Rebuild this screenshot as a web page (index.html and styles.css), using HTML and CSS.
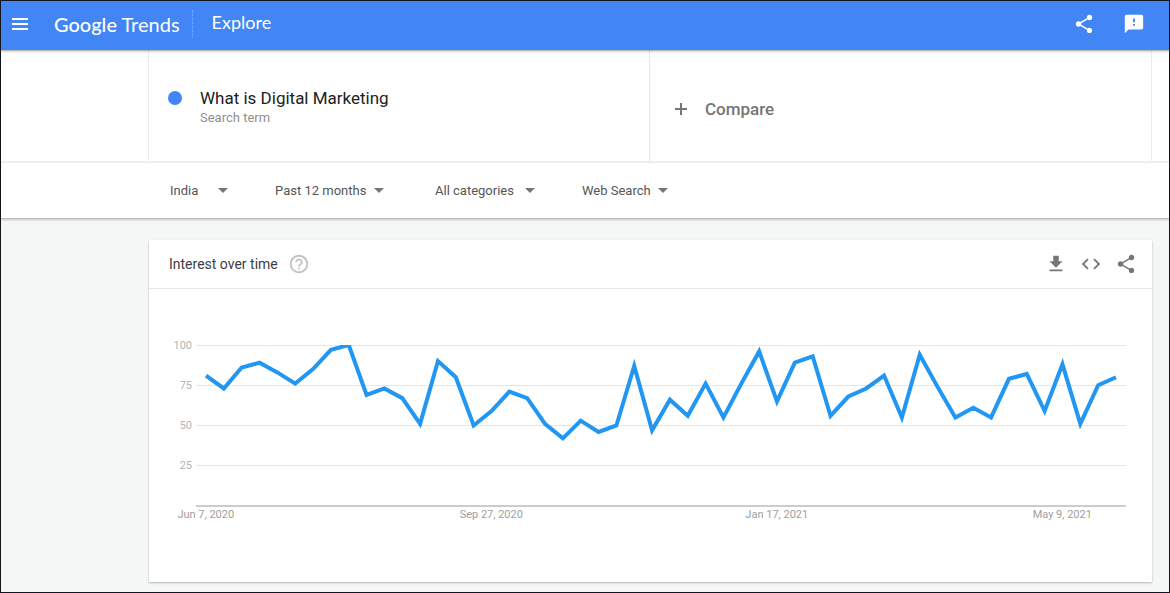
FILE: index.html
```html
<!DOCTYPE html>

<html lang="en">
  <head>
    <meta charset="utf-8" />
    <meta name="viewport" content="width=device-width, initial-scale=1" />
    <title>Google Trends - Explore</title>
    <link rel="stylesheet" href="styles.css">
  </head>

  <body>
    <header class="topbar">
      <button class="icon-button menu" aria-label="Main menu">
        <svg width="24" height="24" viewBox="0 0 24 24"><path d="M4 18h16v-2H4v2zm0-5h16v-2H4v2zm0-7v2h16V6H4z" /></svg>
      </button>
      <a class="logo" href="#"><span class="logo-google">Google</span> Trends</a>
      <h1 class="page-name">Explore</h1>
      <button class="icon-button" aria-label="Share">
        <svg width="22" height="22" viewBox="0 0 24 24"><path d="M18 16.08c-.76 0-1.44.3-1.96.77L8.91 12.7c.05-.23.09-.46.09-.7s-.04-.47-.09-.7l7.05-4.11c.54.5 1.25.81 2.04.81 1.66 0 3-1.34 3-3s-1.34-3-3-3-3 1.34-3 3c0 .24.04.47.09.7L8.04 9.81C7.5 9.31 6.79 9 6 9c-1.66 0-3 1.34-3 3s1.34 3 3 3c.79 0 1.5-.31 2.04-.81l7.12 4.16c-.05.21-.08.43-.08.65 0 1.61 1.31 2.92 2.92 2.92s2.92-1.31 2.92-2.92-1.31-2.92-2.92-2.92z" /></svg>
      </button>
      <button class="icon-button" aria-label="Send feedback">
        <svg width="22" height="22" viewBox="0 0 24 24"><path d="M20 2H4c-1.1 0-2 .9-2 2v18l4-4h14c1.1 0 2-.9 2-2V4c0-1.1-.9-2-2-2zm-7 12h-2v-2h2v2zm0-4h-2V6h2v4z" /></svg>
      </button>
    </header>

    <section class="search">
      <div class="terms">
        <div class="term">
          <span class="dot"></span>
          <div>
            <h2 class="term-name">What is Digital Marketing</h2>
            <p class="term-type">Search term</p>
          </div>
        </div>
        <button class="compare">
          <svg width="14" height="14" viewBox="0 0 14 14"><path d="M7 1v12M1 7h12" /></svg>
          Compare
        </button>
      </div>
    </section>

    <form class="filters">
      <div class="filter">
        <select class="short" aria-label="Location"><option>India</option></select>
      </div>
      <div class="filter">
        <select aria-label="Time range"><option>Past 12 months</option></select>
      </div>
      <div class="filter">
        <select class="wide" aria-label="Category"><option>All categories</option></select>
      </div>
      <div class="filter">
        <select aria-label="Search type"><option>Web Search</option></select>
      </div>
    </form>

    <main class="content">
      <section class="card">
        <div class="card-header">
          <h3 class="card-title">Interest over time</h3>
          <button class="icon-button help" aria-label="Help">
            <svg width="22" height="22" viewBox="0 0 24 24"><path d="M11 18h2v-2h-2v2zm1-16C6.48 2 2 6.48 2 12s4.48 10 10 10 10-4.48 10-10S17.52 2 12 2zm0 18c-4.41 0-8-3.59-8-8s3.59-8 8-8 8 3.59 8 8-3.59 8-8 8zm0-14c-2.21 0-4 1.79-4 4h2c0-1.1.9-2 2-2s2 .9 2 2c0 2-3 1.75-3 5h2c0-2.25 3-2.5 3-5 0-2.21-1.79-4-4-4z" /></svg>
          </button>
          <div class="card-actions">
            <button class="icon-button" aria-label="Download CSV">
              <svg width="22" height="22" viewBox="0 0 24 24"><path d="M19 9h-4V3H9v6H5l7 7 7-7zM5 18v2h14v-2H5z" /></svg>
            </button>
            <button class="icon-button" aria-label="Embed">
              <svg width="22" height="22" viewBox="0 0 24 24"><path d="M9.4 16.6L4.8 12l4.6-4.6L8 6l-6 6 6 6 1.4-1.4zm5.2 0l4.6-4.6-4.6-4.6L16 6l6 6-6 6-1.4-1.4z" /></svg>
            </button>
            <button class="icon-button" aria-label="Share chart">
              <svg width="22" height="22" viewBox="0 0 24 24"><path d="M18 16.08c-.76 0-1.44.3-1.96.77L8.91 12.7c.05-.23.09-.46.09-.7s-.04-.47-.09-.7l7.05-4.11c.54.5 1.25.81 2.04.81 1.66 0 3-1.34 3-3s-1.34-3-3-3-3 1.34-3 3c0 .24.04.47.09.7L8.04 9.81C7.5 9.31 6.79 9 6 9c-1.66 0-3 1.34-3 3s1.34 3 3 3c.79 0 1.5-.31 2.04-.81l7.12 4.16c-.05.21-.08.43-.08.65 0 1.61 1.31 2.92 2.92 2.92s2.92-1.31 2.92-2.92-1.31-2.92-2.92-2.92z" /></svg>
            </button>
          </div>
        </div>

        <div class="chart">
          <div class="y-axis">
            <span>100</span>
            <span>75</span>
            <span>50</span>
            <span>25</span>
          </div>
          <div class="plot-area">
            <div class="plot">
              <!-- x is the week number, y is 100 minus the interest -->
              <svg class="line" viewBox="-0.56 0 52.12 100" preserveAspectRatio="none">
                <polyline points="0,19 1,27 2,14 3,11 4,17 5,24 6,15 7,3 8,0 9,31 10,27 11,33 12,49 13,10 14,20 15,50 16,41 17,29 18,33 19,49 20,58 21,47 22,54 23,50 24,13 25,53 26,34 27,44 28,24 29,45 30,24 31,4 32,35 33,11 34,7 35,44 36,32 37,27 38,19 39,45 40,6 41,26 42,45 43,39 44,45 45,21 46,18 47,41 48,12 49,49 50,25 51,20" />
              </svg>
            </div>
            <!-- one label every 16 weeks, centred on its week -->
            <div class="x-axis">
              <span>Jun 7, 2020</span>
              <span>Sep 27, 2020</span>
              <span>Jan 17, 2021</span>
              <span>May 9, 2021</span>
            </div>
          </div>
        </div>
      </section>
    </main>
  </body>
</html>
```
FILE: styles.css
```css
* {
  box-sizing: border-box;
}

body {
  margin: 0;
  min-height: 100vh;
  border: 1px solid #14141c;
  background: #f5f7f7;
  color: #212121;
  font-family: Roboto, Arial, sans-serif;
  font-size: 14px;
}

h1,
h2,
h3,
p {
  margin: 0;
  font-weight: 400;
}

button,
select {
  border: 0;
  padding: 0;
  background: none;
  color: inherit;
  font: inherit;
  cursor: pointer;
}

svg {
  display: block;
}

.icon-button svg {
  fill: currentColor;
}

/* Top bar */
.topbar {
  position: relative;
  display: flex;
  align-items: center;
  height: 49px;
  padding: 0 24px 3px 7px;
  background: #4285f4;
  box-shadow: 0 1px 2px rgba(0, 0, 0, 0.4);
  color: #fff;
  font-family: Lato, Roboto, sans-serif;
}

.logo {
  margin-left: 22px;
  color: #fff;
  font-size: 20px;
  line-height: 24px;
  text-decoration: none;
}

.logo-google {
  font-weight: 500;
}

.page-name {
  margin: 0 auto 0 12px;
  padding: 0 0 4px 19px;
  border-left: 1px dotted #8ab4f8;
  font-size: 18px;
  line-height: 24px;
}

.topbar .icon-button + .icon-button {
  margin-left: 28px;
}

/* Search terms */
.search {
  padding: 0 17px 0 147px;
  border-bottom: 2px solid #f0f0f0;
  background: #fff;
}

.terms {
  display: grid;
  grid-template-columns: 1fr 1fr;
  height: 111px;
  border: solid #ebebeb;
  border-width: 0 1px;
}

.term {
  display: flex;
  padding: 37px 18px 0 19px;
  border-right: 1px solid #e4e4e4;
}

.dot {
  width: 14px;
  height: 14px;
  margin: 4px 18px 0 0;
  border-radius: 50%;
  background: #4285f4;
}

.term-name {
  font-size: 17px;
  line-height: 22px;
}

.term-type {
  color: #919191;
  font-size: 13px;
  line-height: 18px;
}

.compare {
  display: flex;
  align-items: center;
  padding: 7px 0 0 24px;
  gap: 17px;
  color: #757575;
  font-size: 17px;
  font-weight: 500;
}

.compare svg {
  stroke: #757575;
  stroke-width: 2;
}

/* Filters */
.filters {
  display: grid;
  grid-template-columns: 105px 160px 147px auto;
  align-items: center;
  height: 56px;
  padding: 0 17px 0 169px;
  border-bottom: 1px solid #bdbdbd;
  background: #fff;
  box-shadow: 0 1px 2px rgba(0, 0, 0, 0.2);
  color: #555;
  font-size: 13px;
}

.filter {
  display: flex;
  align-items: center;
}

.filter::after {
  content: '';
  margin-left: -10px;
  border: solid transparent;
  border-width: 5px 5px 0;
  border-top-color: #757575;
  pointer-events: none;
}

.filter select {
  padding-right: 17px;
  appearance: none;
}

.filter .short {
  width: 58px;
}

.filter .wide {
  width: 100px;
}

/* Chart card */
.content {
  padding: 21px 17px 10px 148px;
}

.card {
  overflow: hidden;
  background: #fff;
  box-shadow: 0 1px 2px rgba(0, 0, 0, 0.26);
}

.card-header {
  display: flex;
  align-items: center;
  height: 49px;
  padding: 0 15px 0 20px;
  border-bottom: 1px solid #e8e8e8;
}

.card-title {
  color: #3c4043;
  font-size: 14px;
}

.help {
  margin-left: 10px;
  color: #c2c2c2;
}

.card-actions {
  display: flex;
  margin-left: auto;
  gap: 13px;
  color: #757575;
}

.chart {
  display: flex;
  padding: 56px 26px 59px 16px;
  color: #b3b3b3;
  font-size: 11px;
}

.y-axis {
  display: flex;
  flex-direction: column;
  width: 31px;
  margin-top: -7px;
  padding-right: 4px;
  text-align: right;
}

.y-axis span {
  height: 40px;
  line-height: 16px;
}

.plot-area {
  flex: 1;
}

.plot {
  height: 162px;
  border-bottom: 2px solid #ccc;
  background: repeating-linear-gradient(#e6e6e6 0 1px, transparent 1px 40px);
}

.line {
  width: 100%;
  height: 161px;
}

.line polyline {
  fill: none;
  stroke: #2196f3;
  stroke-width: 4;
  vector-effect: non-scaling-stroke;
}

.x-axis {
  display: grid;
  grid-template-columns: repeat(4, 1fr);
  margin: 0 -8.5% 0 -14.3%;
  color: #a0a0a0;
  line-height: 16px;
  text-align: center;
}
```
